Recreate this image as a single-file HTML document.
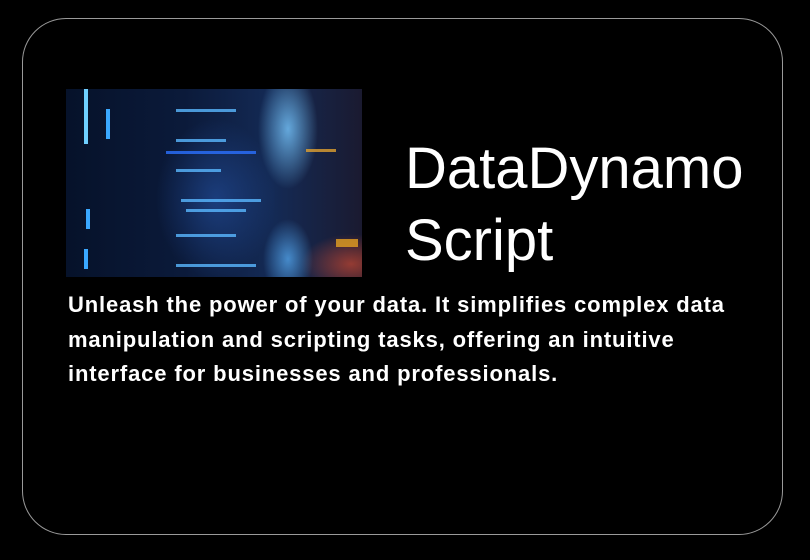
<!DOCTYPE html>
<html><head><meta charset="utf-8"><style>
html,body{margin:0;padding:0;background:#000;width:810px;height:560px;overflow:hidden}
.card{position:absolute;left:22px;top:18px;width:761px;height:517px;border:1.5px solid #9a9a9a;border-radius:44px;box-sizing:border-box}
.img{position:absolute;left:66px;top:89px;width:296px;height:188px;overflow:hidden;
background:
radial-gradient(ellipse 30px 60px at 222px 40px, rgba(120,200,255,.8), transparent),
radial-gradient(ellipse 25px 40px at 222px 170px, rgba(90,180,255,.7), transparent),
radial-gradient(ellipse 50px 30px at 285px 175px, rgba(230,80,50,.6), transparent),
radial-gradient(ellipse 60px 80px at 150px 110px, rgba(40,90,180,.5), transparent),
linear-gradient(90deg,#06122a,#0b1a3a 40%,#142a55 70%,#1a1a30);}
.l{position:absolute;height:3px;background:#5ab8ff;opacity:.8}
.v{position:absolute;width:4px;background:#3aa8ff}
.t{position:absolute;left:405px;top:133px;color:#fff;font:58px/72px "Liberation Sans",sans-serif}
.d{position:absolute;left:68px;top:288px;color:#fff;font:bold 22px/34.5px "Liberation Sans",sans-serif;white-space:nowrap;letter-spacing:.85px}
</style></head><body>
<div class="card"></div>
<div class="img">
<div class="v" style="left:18px;top:0;height:55px;background:#6fd0ff"></div>
<div class="v" style="left:40px;top:20px;height:30px"></div>
<div class="v" style="left:20px;top:120px;height:20px"></div>
<div class="v" style="left:18px;top:160px;height:20px"></div>
<div class="l" style="left:110px;top:20px;width:60px"></div>
<div class="l" style="left:110px;top:50px;width:50px"></div>
<div class="l" style="left:100px;top:62px;width:90px;background:#2a70ff"></div>
<div class="l" style="left:110px;top:80px;width:45px"></div>
<div class="l" style="left:115px;top:110px;width:80px"></div>
<div class="l" style="left:120px;top:120px;width:60px"></div>
<div class="l" style="left:110px;top:145px;width:60px"></div>
<div class="l" style="left:110px;top:175px;width:80px"></div>
<div class="l" style="left:240px;top:60px;width:30px;background:#e0a030"></div>
<div class="l" style="left:270px;top:150px;width:22px;height:8px;background:#e6a020"></div>
</div>
<div class="t">DataDynamo<br>Script</div>
<div class="d">Unleash the power of your data. It simplifies complex data<br>manipulation and scripting tasks, offering an intuitive<br>interface for businesses and professionals.</div>
</body></html>
